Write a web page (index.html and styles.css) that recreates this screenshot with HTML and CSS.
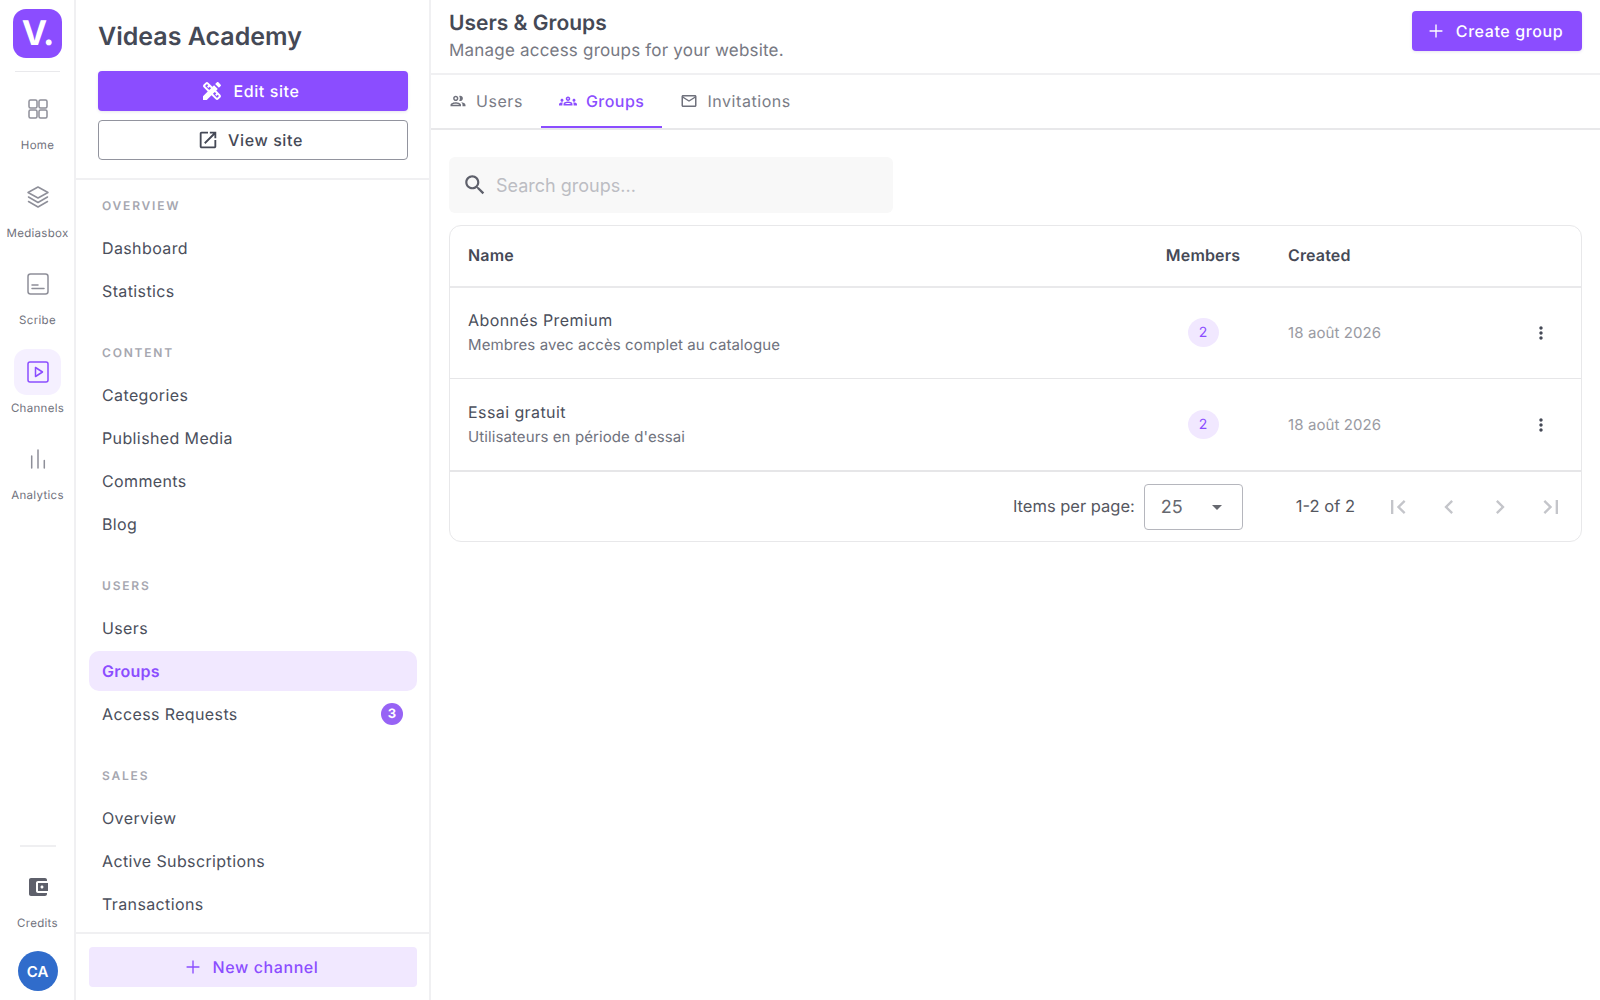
FILE: index.html
```html
<!DOCTYPE html>
<html lang="en">
<head>
<meta charset="utf-8">
<title>Users &amp; Groups</title>
<link rel="stylesheet" href="styles.css">
</head>
<body>
<div class="app">
  <aside class="rail">
    <div class="logo">V.</div>
    <div class="rail-sep"></div>
    <nav class="rail-nav">
      <a class="rail-item"><span class="rail-icon"><svg viewBox="0 0 24 24" class="ico-line"><rect x="3" y="3" width="8" height="8" rx="1.500"/><rect x="13" y="3" width="8" height="8" rx="1.500"/><rect x="3" y="13" width="8" height="8" rx="1.500"/><rect x="13" y="13" width="8" height="8" rx="1.500"/></svg></span><span class="rail-label">Home</span></a>
      <a class="rail-item"><span class="rail-icon"><svg viewBox="0 0 24 24" class="ico-line"><path d="M12 2 2 7.500l10 5.500 10-5.500z"/><path d="M2.500 12l9.500 5.500 9.500-5.500"/><path d="M2.500 16.500l9.500 5.500 9.500-5.500"/></svg></span><span class="rail-label">Mediasbox</span></a>
      <a class="rail-item"><span class="rail-icon"><svg viewBox="0 0 24 24" class="ico-line"><rect x="2" y="2" width="20" height="20" rx="2.500"/><path d="M6 16.500h12M6 13h6"/></svg></span><span class="rail-label">Scribe</span></a>
      <a class="rail-item active"><span class="rail-icon"><svg viewBox="0 0 24 24" class="ico-line"><rect x="2" y="2" width="20" height="20" rx="2"/><path d="M9.500 7.500v9L16.500 12z"/></svg></span><span class="rail-label">Channels</span></a>
      <a class="rail-item"><span class="rail-icon"><svg viewBox="0 0 24 24" class="ico-line"><path d="M5.700 9v12M12 3v18M18.300 13.500V21"/></svg></span><span class="rail-label">Analytics</span></a>
    </nav>
    <div class="rail-bottom">
      <div class="rail-sep small"></div>
      <a class="rail-item credits"><span class="rail-icon"><svg viewBox="0 0 24 24" class="ico-fill i24"><path d="M21 18v1c0 1.100-.9 2-2 2H5c-1.110 0-2-.9-2-2V5c0-1.100.89-2 2-2h14c1.100 0 2 .9 2 2v1h-9c-1.110 0-2 .9-2 2v8c0 1.100.89 2 2 2h9zm-9-2h10V8H12v8zm4-2.500c-.83 0-1.500-.67-1.500-1.500s.67-1.500 1.500-1.500 1.500.67 1.500 1.500-.67 1.500-1.500 1.500z"/></svg></span><span class="rail-label">Credits</span></a>
      <div class="avatar">CA</div>
    </div>
  </aside>

  <aside class="side">
    <div class="side-head">
      <h2 class="site-name">Videas Academy</h2>
      <a class="btn btn-primary wide"><svg viewBox="0 0 24 24" class="ico-fill i24"><path d="M16.240 11.510l1.570-1.570-3.750-3.750-1.570 1.570-4.140-4.130c-.78-.78-2.050-.78-2.830 0l-1.900 1.900c-.78.78-.78 2.050 0 2.830l4.130 4.130L3 17.250V21h3.750l4.760-4.760 4.130 4.130c.95.95 2.230.6 2.830 0l1.900-1.900c.78-.78.78-2.050 0-2.830l-4.130-4.130zm-7.060-.44L5.040 6.940l1.890-1.900L8.200 6.310 7.020 7.500l1.410 1.410 1.190-1.190 1.450 1.450-1.890 1.900zm7.880 7.890l-4.130-4.130 1.900-1.900 1.450 1.450-1.190 1.190 1.410 1.410 1.190-1.190 1.270 1.270-1.900 1.900zm3.650-11.920c.39-.39.39-1.020 0-1.410l-2.340-2.340c-.47-.47-1.120-.29-1.410 0l-1.830 1.830 3.750 3.750 1.830-1.830z"/></svg>Edit site</a>
      <a class="btn btn-outline wide"><svg viewBox="0 0 24 24" class="ico-fill i22"><path d="M19 19H5V5h7V3H5c-1.110 0-2 .9-2 2v14c0 1.100.89 2 2 2h14c1.100 0 2-.9 2-2v-7h-2v7zM14 3v2h3.590l-9.830 9.830 1.410 1.410L19 6.410V10h2V3h-7z"/></svg>View site</a>
    </div>
    <nav class="side-nav">
      <div class="section">Overview</div>
      <a class="nav-item">Dashboard</a>
      <a class="nav-item">Statistics</a>
      <div class="section">Content</div>
      <a class="nav-item">Categories</a>
      <a class="nav-item">Published Media</a>
      <a class="nav-item">Comments</a>
      <a class="nav-item">Blog</a>
      <div class="section">Users</div>
      <a class="nav-item">Users</a>
      <a class="nav-item current">Groups</a>
      <a class="nav-item">Access Requests<span class="count">3</span></a>
      <div class="section">Sales</div>
      <a class="nav-item">Overview</a>
      <a class="nav-item">Active Subscriptions</a>
      <a class="nav-item">Transactions</a>
    </nav>
    <div class="side-foot">
      <a class="btn btn-soft"><svg viewBox="0 0 24 24" class="ico-plus"><path d="M12 5v14M5 12h14"/></svg>New channel</a>
    </div>
  </aside>

  <main class="main">
    <header class="page-head">
      <div>
        <h1 class="page-title">Users &amp; Groups</h1>
        <p class="page-sub">Manage access groups for your website.</p>
      </div>
      <a class="btn btn-primary create"><svg viewBox="0 0 24 24" class="ico-plus"><path d="M12 5v14M5 12h14"/></svg>Create group</a>
    </header>
    <div class="tabs">
      <a class="tab"><svg viewBox="0 0 24 24" class="ico-fill i18"><path d="M9 13.750c-2.340 0-7 1.170-7 3.500V19h14v-1.750c0-2.330-4.660-3.500-7-3.500zM4.340 17c.84-.58 2.870-1.250 4.660-1.250s3.820.67 4.660 1.250H4.340zM9 12c1.930 0 3.500-1.570 3.500-3.500S10.930 5 9 5 5.500 6.570 5.500 8.500 7.070 12 9 12zm0-5c.83 0 1.500.67 1.500 1.500S9.830 10 9 10s-1.500-.67-1.500-1.500S8.170 7 9 7zm7.040 6.810c1.160.84 1.960 1.960 1.960 3.440V19h4v-1.750c0-2.020-3.500-3.170-5.960-3.440zM15 12c1.930 0 3.500-1.570 3.500-3.500S16.930 5 15 5c-.54 0-1.040.13-1.500.35.63.89 1 1.980 1 3.150s-.37 2.260-1 3.150c.46.22.96.35 1.500.35z"/></svg>Users</a>
      <a class="tab on"><svg viewBox="0 0 24 24" class="ico-fill i18"><path d="M4 13c1.100 0 2-.9 2-2s-.9-2-2-2-2 .9-2 2 .9 2 2 2zm1.130 1.100c-.37-.06-.74-.1-1.130-.1-.99 0-1.930.21-2.780.58C.48 14.900 0 15.620 0 16.430V18h4.500v-1.610c0-.83.23-1.610.63-2.290zM20 13c1.100 0 2-.9 2-2s-.9-2-2-2-2 .9-2 2 .9 2 2 2zm4 3.430c0-.81-.48-1.530-1.220-1.850-.85-.37-1.790-.58-2.780-.58-.39 0-.76.04-1.130.1.4.68.63 1.460.63 2.290V18H24v-1.570zm-7.760-2.780c-1.170-.52-2.610-.9-4.240-.9-1.630 0-3.070.39-4.240.9C6.680 14.130 6 15.210 6 16.390V18h12v-1.610c0-1.180-.68-2.260-1.760-2.740zM8.070 16c.09-.23.13-.39.91-.69.97-.38 1.990-.56 3.020-.56s2.050.18 3.020.56c.77.3.81.46.91.69H8.070zM12 8c.55 0 1 .45 1 1s-.45 1-1 1-1-.45-1-1 .45-1 1-1m0-2c-1.660 0-3 1.340-3 3s1.340 3 3 3 3-1.340 3-3-1.340-3-3-3z"/></svg>Groups</a>
      <a class="tab"><svg viewBox="0 0 24 24" class="ico-fill i18"><path d="M22 6c0-1.100-.9-2-2-2H4c-1.100 0-2 .9-2 2v12c0 1.100.9 2 2 2h16c1.100 0 2-.9 2-2V6zm-2 0l-8 5-8-5h16zm0 12H4V8l8 5 8-5v10z"/></svg>Invitations</a>
    </div>
    <section class="content">
      <label class="search">
        <svg viewBox="0 0 24 24" class="ico-fill i26"><path d="M15.500 14h-.79l-.28-.27C15.410 12.590 16 11.110 16 9.500 16 5.910 13.090 3 9.500 3S3 5.910 3 9.500 5.910 16 9.500 16c1.610 0 3.090-.59 4.230-1.570l.27.28v.79l5 4.990L20.490 19l-4.990-5zm-6 0C7.010 14 5 11.990 5 9.500S7.010 5 9.500 5 14 7.010 14 9.500 11.990 14 9.500 14z"/></svg>
        <input class="search-input" placeholder="Search groups...">
      </label>
      <div class="card">
        <div class="row head">
          <div class="cell">Name</div>
          <div class="cell center">Members</div>
          <div class="cell">Created</div>
          <div class="cell"></div>
        </div>
        <div class="row body">
          <div class="cell"><div class="g-name">Abonnés Premium</div><div class="g-desc">Membres avec accès complet au catalogue</div></div>
          <div class="cell center"><span class="pill">2</span></div>
          <div class="cell date">18 août 2026</div>
          <div class="cell center"><svg viewBox="0 0 24 24" class="ico-fill i20 dark"><path d="M12 8c1.100 0 2-.9 2-2s-.9-2-2-2-2 .9-2 2 .9 2 2 2zm0 2c-1.100 0-2 .9-2 2s.9 2 2 2 2-.9 2-2-.9-2-2-2zm0 6c-1.100 0-2 .9-2 2s.9 2 2 2 2-.9 2-2-.9-2-2-2z"/></svg></div>
        </div>
        <div class="row body last">
          <div class="cell"><div class="g-name">Essai gratuit</div><div class="g-desc">Utilisateurs en période d'essai</div></div>
          <div class="cell center"><span class="pill">2</span></div>
          <div class="cell date">18 août 2026</div>
          <div class="cell center"><svg viewBox="0 0 24 24" class="ico-fill i20 dark"><path d="M12 8c1.100 0 2-.9 2-2s-.9-2-2-2-2 .9-2 2 .9 2 2 2zm0 2c-1.100 0-2 .9-2 2s.9 2 2 2 2-.9 2-2-.9-2-2-2zm0 6c-1.100 0-2 .9-2 2s.9 2 2 2 2-.9 2-2-.9-2-2-2z"/></svg></div>
        </div>
        <div class="pager">
          <span class="per">Items per page:</span>
          <div class="select"><span>25</span><i class="caret"></i></div>
          <span class="range">1-2 of 2</span>
          <div class="pg-btns">
            <span class="pg"><svg viewBox="0 0 24 24" class="ico-fill i28"><path d="M18.410 16.590L13.820 12l4.590-4.590L17 6l-6 6 6 6zM6 6h2v12H6z"/></svg></span>
            <span class="pg"><svg viewBox="0 0 24 24" class="ico-fill i28"><path d="M15.410 7.410L14 6l-6 6 6 6 1.410-1.410L10.830 12z"/></svg></span>
            <span class="pg"><svg viewBox="0 0 24 24" class="ico-fill i28"><path d="M10 6L8.590 7.410 13.170 12l-4.580 4.590L10 18l6-6z"/></svg></span>
            <span class="pg"><svg viewBox="0 0 24 24" class="ico-fill i28"><path d="M5.590 7.410L10.180 12l-4.590 4.590L7 18l6-6-6-6zM16 6h2v12h-2z"/></svg></span>
          </div>
        </div>
      </div>
    </section>
  </main>
</div>
</body>
</html>
```
FILE: styles.css
```css
* { box-sizing: border-box; }
html, body { margin: 0; height: 100%; }
body { font-family: Inter, "Liberation Sans", sans-serif; color: #454956; background: #fff; overflow: hidden; text-rendering: geometricPrecision; }
a { color: inherit; text-decoration: none; }
h1, h2, p { margin: 0; }

.app { display: flex; height: 1000px; }

/* rail */
.rail { width: 76px; flex: none; border-right: 2px solid #f0f0f2; display: flex; flex-direction: column; align-items: center; padding: 9px 0 0 1px; }
.logo { width: 49px; height: 49px; border-radius: 13px; background: #8b4dff; color: #fff; font-weight: 700; font-size: 34px; display: flex; align-items: center; justify-content: center; letter-spacing: -1px; }
.rail-sep { width: 45px; height: 1px; background: #e9e9ec; margin-top: 13px; }
.rail-sep.small { width: 36px; height: 2px; background: #efeff1; margin: 0 0 17px; }
.rail-nav { display: flex; flex-direction: column; margin-top: 14px; }
.rail-item { display: flex; flex-direction: column; align-items: center; height: 87.500px; width: 73px; }
.rail-icon { width: 47px; height: 46px; border-radius: 13px; display: flex; align-items: center; justify-content: center; color: #8e8f99; }
.rail-label { font-size: 11.500px; line-height: 16px; letter-spacing: .3px; color: #6f717c; margin-top: 5px; }
.rail-item.active .rail-icon { background: #f5f0ff; color: #8b4dff; }
.ico-line { width: 24px; height: 24px; fill: none; stroke: currentColor; stroke-width: 1.500; stroke-linejoin: round; stroke-linecap: round; }
.rail-bottom { margin-top: auto; display: flex; flex-direction: column; align-items: center; padding-bottom: 9px; }
.credits { height: 87px; }
.credits .rail-icon { color: #5e606b; }
.avatar { width: 40px; height: 40px; border-radius: 50%; background: #306ccb; color: #fff; font-size: 15px; font-weight: 600; display: flex; align-items: center; justify-content: center; }

/* icons */
.ico-fill { fill: currentColor; flex: none; }
.i18 { width: 18px; height: 18px; }
.i20 { width: 20px; height: 20px; }
.i22 { width: 22px; height: 22px; }
.i24 { width: 24px; height: 24px; }
.i26 { width: 26px; height: 26px; }
.i28 { width: 28px; height: 28px; }
.ico-plus { width: 22px; height: 22px; fill: none; stroke: currentColor; stroke-width: 1.500; flex: none; }

/* buttons */
.btn { display: flex; align-items: center; justify-content: center; gap: 9px; height: 40px; padding-right: 6px; border-radius: 4px; font-size: 16px; font-weight: 500; letter-spacing: .6px; }
.btn-primary { background: #8b4dff; color: #fff; box-shadow: 0 1px 3px rgba(60, 40, 120, .12); }
.btn-outline { border: 1px solid #92949e; color: #454956; }
.btn-soft { background: #f1e8ff; color: #8b4dff; }

/* sidebar */
.side { width: 355px; flex: none; border-right: 2px solid #f0f0f2; display: flex; flex-direction: column; }
.side-head { padding: 0 22px 18px; display: flex; flex-direction: column; gap: 9px; border-bottom: 2px solid #f0f0f2; flex: none; }
.site-name { font-size: 25px; font-weight: 600; line-height: 32px; margin: 21px 0 9px; color: #454956; }
.wide { width: 310px; }
.side-nav { flex: 1; min-height: 0; overflow: hidden; padding: 0 12px 0 13px; }
.section { font-size: 12px; font-weight: 600; letter-spacing: 1.800px; text-transform: uppercase; color: #a6a7b0; line-height: 16px; padding: 18px 0 0 13px; margin: 0 0 14px; }
.section ~ .section { padding-top: 31px; }
.nav-item { display: flex; align-items: center; justify-content: space-between; height: 40px; margin-bottom: 3px; padding: 0 14px 0 13px; border-radius: 10px; font-size: 16px; font-weight: 400; letter-spacing: .38px; color: #4b4f5c; }
.nav-item.current { background: #f1e8ff; color: #8b4dff; font-weight: 600; letter-spacing: .25px; }
.count { width: 22px; height: 22px; border-radius: 50%; background: #9763f5; color: #fff; font-size: 13px; font-weight: 700; letter-spacing: 0; display: flex; align-items: center; justify-content: center; }
.side-foot { border-top: 2px solid #f0f0f2; padding: 13px 12px 13px 13px; flex: none; }

/* main */
.main { flex: 1; min-width: 0; display: flex; flex-direction: column; }
.page-head { height: 75px; flex: none; display: flex; justify-content: space-between; padding: 12px 18px 0; border-bottom: 2px solid #f0f0f2; }
.page-title { font-size: 21px; font-weight: 600; line-height: 24px; color: #454956; }
.page-sub { font-size: 17px; letter-spacing: .2px; line-height: 26px; margin-top: 2px; color: #777983; }
.create { width: 170px; margin-top: -1px; }
.tabs { display: flex; height: 55px; flex: none; border-bottom: 2px solid #e8e8ea; }
.tab { display: flex; align-items: center; gap: 9px; padding: 0 18px 2px; height: 53px; font-size: 16px; font-weight: 400; color: #7a7c86; letter-spacing: .55px; }
.tab.on { color: #8b4dff; font-weight: 500; letter-spacing: .48px; padding-bottom: 0; border-bottom: 2px solid #8b4dff; }
.tab .ico-fill { color: #6f717c; }
.tab.on .ico-fill { color: #8b4dff; }
.content { padding: 27px 18px; }
.search { display: flex; align-items: center; gap: 6px; width: 444px; height: 56px; padding: 0 13px; background: #f8f8f8; border-radius: 6px; color: #5e606b; }
.search-input { flex: 1; min-width: 0; border: 0; outline: 0; background: transparent; font: 400 18px Inter, "Liberation Sans", sans-serif; color: #454956; }
.search-input::placeholder { color: #bcbdc3; opacity: 1; }

.card { margin-top: 12px; border: 1px solid #e8e8ea; border-radius: 12px; overflow: hidden; }
.row { display: grid; grid-template-columns: 1fr 134px 231px 80px; align-items: center; }
.cell { padding-left: 18px; }
.cell.center { padding-left: 0; display: flex; justify-content: center; }
.head { height: 62px; padding-bottom: 3px; border-bottom: 2px solid #e9e9eb; font-size: 16px; font-weight: 600; letter-spacing: .15px; color: #454956; }
.body { height: 91px; padding-bottom: 1px; border-bottom: 1px solid #e6e6e8; }
.body.last { height: 93px; padding-bottom: 0; border-bottom: 2px solid #e6e6e8; }
.g-name { font-size: 16px; font-weight: 400; letter-spacing: .42px; line-height: 24px; color: #4b4f5c; }
.g-desc { font-size: 15px; letter-spacing: .1px; line-height: 25px; color: #6f727d; }
.pill { width: 31px; height: 29px; border-radius: 50%; background: #f1e8ff; color: #8b4dff; font-size: 14px; display: flex; align-items: center; justify-content: center; }
.date { font-size: 15px; letter-spacing: .1px; color: #9a9ba3; }
.dark { color: #454956; }

.pager { height: 69px; display: flex; align-items: center; justify-content: flex-end; font-size: 16.500px; color: #55575f; padding-right: 5px; }
.per { margin-right: 9px; padding-bottom: 2px; }
.select { width: 99px; height: 46px; border: 1px solid #b5b6bd; border-radius: 4px; display: flex; align-items: center; justify-content: space-between; padding: 1px 20px 0 16px; font-size: 18px; color: #66686f; }
.caret { width: 0; height: 0; border-left: 5.500px solid transparent; border-right: 5.500px solid transparent; border-top: 5.500px solid #66686f; }
.range { margin-left: 53px; margin-right: 17px; padding-bottom: 2px; }
.pg-btns { display: flex; }
.pg { width: 51px; height: 40px; display: flex; align-items: center; justify-content: center; color: #c4c5ca; }
```
